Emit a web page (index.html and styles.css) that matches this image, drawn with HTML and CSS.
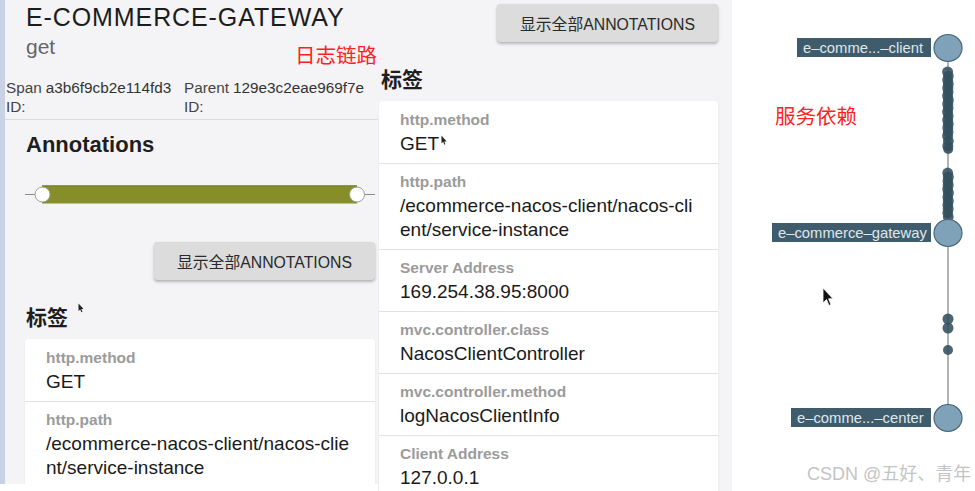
FILE: index.html
```html
<!DOCTYPE html>
<html lang="zh">
<head>
<meta charset="utf-8">
<title>Trace</title>
<link rel="stylesheet" href="styles.css">
</head>
<body>
<div class="strip"></div>

<section class="pane pane-left">
  <h1 class="title">E-COMMERCE-GATEWAY</h1>
  <div class="sub">get</div>
  <div class="meta">
    <div class="meta-item"><span class="meta-label">Span ID:</span><span class="meta-val">a3b6f9cb2e114fd3</span></div>
    <div class="meta-item"><span class="meta-label">Parent ID:</span><span class="meta-val">129e3c2eae969f7e</span></div>
  </div>
  <h2 class="sec-title">Annotations</h2>
  <div class="slider">
    <svg width="350" height="19" viewBox="0 0 350 19">
      <line x1="0" y1="9.5" x2="350" y2="9.5" stroke="#8a8a8a" stroke-width="1"/>
      <rect x="17" y="0.5" width="315" height="18" fill="#868e2a"/>
      <line x1="17" y1="0.8" x2="332" y2="0.8" stroke="#6f7522" stroke-width="0.8"/>
      <circle cx="17.5" cy="9.5" r="7.5" fill="#fff" stroke="#9c9c9c" stroke-width="1"/>
      <circle cx="332" cy="9.5" r="7.5" fill="#fff" stroke="#9c9c9c" stroke-width="1"/>
    </svg>
  </div>
  <div class="btn-row btn-row-left"><button class="btn">显示全部ANNOTATIONS</button></div>
  <h3 class="tags-title">标签</h3>
  <div class="card card-left">
    <div class="row"><div class="row-label">http.method</div><div class="row-val">GET</div></div>
    <div class="row"><div class="row-label">http.path</div><div class="row-val">/ecommerce-nacos-client/nacos-client/service-instance</div></div>
  </div>
</section>

<section class="pane pane-mid">
  <div class="btn-row"><button class="btn">显示全部ANNOTATIONS</button></div>
  <h3 class="tags-title tags-title-mid">标签</h3>
  <div class="card card-mid">
    <div class="row"><div class="row-label">http.method</div><div class="row-val">GET</div></div>
    <div class="row"><div class="row-label">http.path</div><div class="row-val">/ecommerce-nacos-client/nacos-client/service-instance</div></div>
    <div class="row"><div class="row-label">Server Address</div><div class="row-val">169.254.38.95:8000</div></div>
    <div class="row"><div class="row-label">mvc.controller.class</div><div class="row-val">NacosClientController</div></div>
    <div class="row"><div class="row-label">mvc.controller.method</div><div class="row-val">logNacosClientInfo</div></div>
    <div class="row"><div class="row-label">Client Address</div><div class="row-val">127.0.0.1</div></div>
  </div>
</section>

<section class="graph">
  <svg class="graph-svg" width="243" height="491" viewBox="0 0 243 491">
    <line x1="216" y1="50" x2="216" y2="415" stroke="#9ea3aa" stroke-width="1.6"/>
    <g fill="#33505f" fill-opacity="0.88">
      <circle cx="215.6" cy="72" r="5.5"/><circle cx="216.4" cy="76" r="5.3"/>
      <circle cx="215.7" cy="80" r="5.5"/><circle cx="216.3" cy="84" r="5.4"/>
      <circle cx="215.8" cy="88" r="5.6"/><circle cx="216.2" cy="92" r="5.3"/>
      <circle cx="215.6" cy="96" r="5.5"/><circle cx="216.4" cy="100" r="5.4"/>
      <circle cx="215.8" cy="104" r="5.6"/><circle cx="216.2" cy="108" r="5.3"/>
      <circle cx="215.6" cy="112" r="5.5"/><circle cx="216.4" cy="116" r="5.2"/>
      <circle cx="215.7" cy="120" r="5.5"/><circle cx="216.3" cy="124" r="5.4"/>
      <circle cx="215.8" cy="128" r="5.5"/><circle cx="216.2" cy="132" r="5.3"/>
      <circle cx="215.6" cy="136" r="5.5"/><circle cx="216.4" cy="141" r="5.4"/>
      <circle cx="215.8" cy="146" r="5.5"/><circle cx="216.2" cy="149" r="5"/>
      <circle cx="215.7" cy="173" r="5.4"/><circle cx="216.3" cy="177" r="5.5"/>
      <circle cx="215.8" cy="181" r="5.3"/><circle cx="216.2" cy="185" r="5.5"/>
      <circle cx="215.6" cy="189" r="5.4"/><circle cx="216.4" cy="193" r="5.5"/>
      <circle cx="215.7" cy="197" r="5.3"/><circle cx="216.3" cy="201" r="5.5"/>
      <circle cx="215.8" cy="205" r="5.4"/><circle cx="216.2" cy="209" r="5.5"/>
      <circle cx="215.7" cy="213" r="5.3"/><circle cx="216.3" cy="217" r="5.4"/>
      <circle cx="216" cy="319" r="5.5"/><circle cx="216" cy="328" r="5.5"/>
      <circle cx="216" cy="350" r="5"/>
    </g>
    <g class="node">
      <ellipse cx="216" cy="48" rx="14" ry="13.5" fill="#7fa2b8" stroke="#48677c" stroke-width="1.2"/>
      <rect x="65" y="38" width="134" height="19" fill="#3f5c6d"/>
      <text class="node-text" x="71" y="52.5">e–comme...–client</text>
    </g>
    <g class="node">
      <ellipse cx="216" cy="233" rx="14" ry="13.5" fill="#7fa2b8" stroke="#48677c" stroke-width="1.2"/>
      <rect x="40" y="223" width="159" height="19" fill="#3f5c6d"/>
      <text class="node-text" x="46" y="237.5">e–commerce–gateway</text>
    </g>
    <g class="node">
      <ellipse cx="216" cy="418" rx="14" ry="13.5" fill="#7fa2b8" stroke="#48677c" stroke-width="1.2"/>
      <rect x="59" y="408" width="140" height="19" fill="#3f5c6d"/>
      <text class="node-text" x="65" y="422.5">e–comme...–center</text>
    </g>
  </svg>
  <div class="note note-deps">服务依赖</div>
  <div class="watermark">CSDN @五好、青年</div>
  <svg class="cursor cursor-big" width="12" height="20" viewBox="0 0 12 20">
    <path d="M1 1 L1 16 L4.5 12.5 L7 18.5 L9 17.6 L6.6 11.8 L11 11.8 Z" fill="#111" stroke="#fff" stroke-width="0.8"/>
  </svg>
</section>

<div class="note note-log">日志链路</div>
<svg class="cursor cursor-a" width="6" height="10" viewBox="0 0 6 10">
  <path d="M0.5 0.5 L0.5 8 L2.2 6.4 L3.4 9.3 L4.4 8.8 L3.3 6 L5.6 6 Z" fill="#222"/>
</svg>
<svg class="cursor cursor-b" width="6" height="11" viewBox="0 0 6 11">
  <path d="M0.5 0.5 L0.5 8.5 L2.2 6.8 L3.4 9.8 L4.4 9.3 L3.3 6.4 L5.6 6.4 Z" fill="#222"/>
</svg>
</body>
</html>
```

FILE: styles.css
```css
* { box-sizing: border-box; }

html, body {
  margin: 0;
  padding: 0;
}

body {
  width: 975px;
  height: 491px;
  overflow: hidden;
  display: flex;
  align-items: flex-start;
  background: #ffffff;
  font-family: "Liberation Sans", "Noto Sans CJK SC", sans-serif;
  color: #1c1c1c;
  position: relative;
}

.strip {
  width: 5px;
  height: 484px;
  background: #c9d2e4;
  flex: none;
}

.pane {
  background: #f4f4f6;
  flex: none;
  overflow: hidden;
}

.pane-left {
  width: 373px;
  height: 484px;
}

.pane-mid {
  width: 354px;
  height: 491px;
  padding: 4px 14px 0 1px;
}

.title {
  margin: 3px 0 0 21px;
  font-size: 25px;
  line-height: 28px;
  letter-spacing: 0.9px;
  font-weight: normal;
  color: #1c1c1c;
  white-space: nowrap;
}

.sub {
  margin: 3px 0 0 21px;
  font-size: 21px;
  line-height: 26px;
  color: #666666;
}

.meta {
  margin-top: 18px;
  padding: 0 0 3px 1px;
  border-bottom: 1px solid #dcdcdc;
  display: grid;
  grid-template-columns: 178px 1fr;
  font-size: 15.3px;
  line-height: 19px;
}

.meta-item {
  display: flex;
  gap: 4px;
  align-items: flex-start;
}

.meta-label {
  width: min-content;
  color: #444444;
}

.meta-val {
  color: #333333;
  white-space: nowrap;
}

.sec-title {
  margin: 12px 0 0 21px;
  font-size: 22px;
  line-height: 26px;
  font-weight: bold;
  color: #1e1e1e;
}

.slider {
  margin: 27px 0 0 20px;
  height: 19px;
}

.slider svg { display: block; }

.btn-row {
  display: flex;
  justify-content: flex-end;
}

.btn-row-left {
  margin-top: 38px;
  padding-right: 3px;
}

.btn {
  width: 221px;
  height: 38px;
  border: none;
  border-radius: 4px;
  background: #dcdcdc;
  box-shadow: 0 2px 3px rgba(0, 0, 0, 0.25), 0 0 1px rgba(0, 0, 0, 0.12);
  font-family: "Liberation Sans", "Noto Sans CJK SC", sans-serif;
  font-size: 15.8px;
  color: #2a2a2a;
  padding: 0;
  white-space: nowrap;
}

.tags-title {
  margin: 23px 0 0 21px;
  font-size: 21px;
  line-height: 30px;
  font-weight: bold;
  color: #1e1e1e;
}

.tags-title-mid {
  margin-left: 2px;
}

.card {
  margin-top: 6px;
  background: #ffffff;
  border-radius: 4px;
  box-shadow: 0 1px 2px rgba(0, 0, 0, 0.08);
}

.card-left {
  margin-left: 20px;
  margin-right: 3px;
}

.row {
  padding: 9px 21px 7px;
  border-top: 1px solid #e2e2e2;
}

.row:first-child {
  padding-top: 10px;
  border-top: none;
}

.row-label {
  font-size: 15.5px;
  line-height: 18px;
  font-weight: bold;
  color: #9b9b9b;
}

.row-val {
  margin-top: 3px;
  font-size: 19px;
  line-height: 24px;
  color: #1a1a1a;
  word-break: break-all;
}

.graph {
  width: 243px;
  height: 491px;
  flex: none;
  position: relative;
  background: #ffffff;
}

.graph-svg {
  display: block;
}

.node-text {
  font-family: "Liberation Sans", sans-serif;
  font-size: 14.8px;
  fill: #dfe7ec;
}

.note {
  position: absolute;
  font-family: "Noto Sans CJK SC", sans-serif;
  font-size: 20.5px;
  line-height: 24px;
  color: #ff2222;
  white-space: nowrap;
}

.note-log {
  left: 295px;
  top: 42px;
}

.note-deps {
  left: 43px;
  top: 103px;
}

.watermark {
  position: absolute;
  left: 75px;
  top: 464px;
  font-size: 18px;
  line-height: 20px;
  color: #c4c4c4;
  white-space: nowrap;
}

.cursor {
  position: absolute;
  display: block;
}

.cursor-big {
  left: 90px;
  top: 287px;
}

.cursor-a {
  left: 78px;
  top: 303px;
}

.cursor-b {
  left: 441px;
  top: 135px;
}
```
